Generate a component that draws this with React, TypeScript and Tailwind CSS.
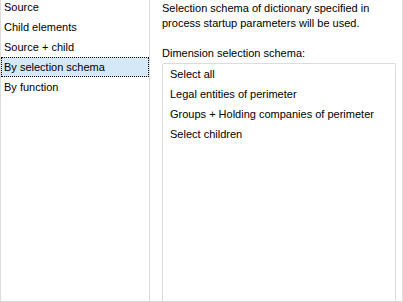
import React from "react";

const sources = [
  "Source",
  "Child elements",
  "Source + child",
  "By selection schema",
  "By function",
];

const schemas = [
  "Select all",
  "Legal entities of perimeter",
  "Groups + Holding companies of perimeter",
  "Select children",
];

export default function App() {
  const selected = 3;

  return (
    <div
      className="flex h-[302px] w-[403px] overflow-hidden border-b border-l border-r border-[#dcdcdc] bg-white text-[11px] text-black"
      style={{ fontFamily: '"Liberation Sans", Arial, sans-serif' }}
    >
      {/* Mode list */}
      <div className="flex w-[149px] shrink-0 flex-col border-r border-[#dcdcdc]">
        <div className="-mt-[3px]">
          {sources.map((s, i) => (
            <div
              key={s}
              className={
                i === selected
                  ? "flex h-5 items-center border border-dotted border-black bg-[#d4e8f8] pl-[2px]"
                  : "flex h-5 items-center border border-transparent pl-[2px]"
              }
            >
              {s}
            </div>
          ))}
        </div>
      </div>

      {/* Settings */}
      <div className="flex flex-1 flex-col pl-3 pr-[6px]">
        <p className="pt-[1px] leading-[15px]">
          Selection schema of dictionary specified in
          <br />
          process startup parameters will be used.
        </p>
        <div className="mt-[15px] leading-[15px]">Dimension selection schema:</div>
        <div className="mt-[2px] flex-1 rounded-t-[2px] border border-b-0 border-[#dcdcdc] pl-[7px]">
          {schemas.map((s) => (
            <div key={s} className="flex h-5 items-center">
              {s}
            </div>
          ))}
        </div>
      </div>
    </div>
  );
}
